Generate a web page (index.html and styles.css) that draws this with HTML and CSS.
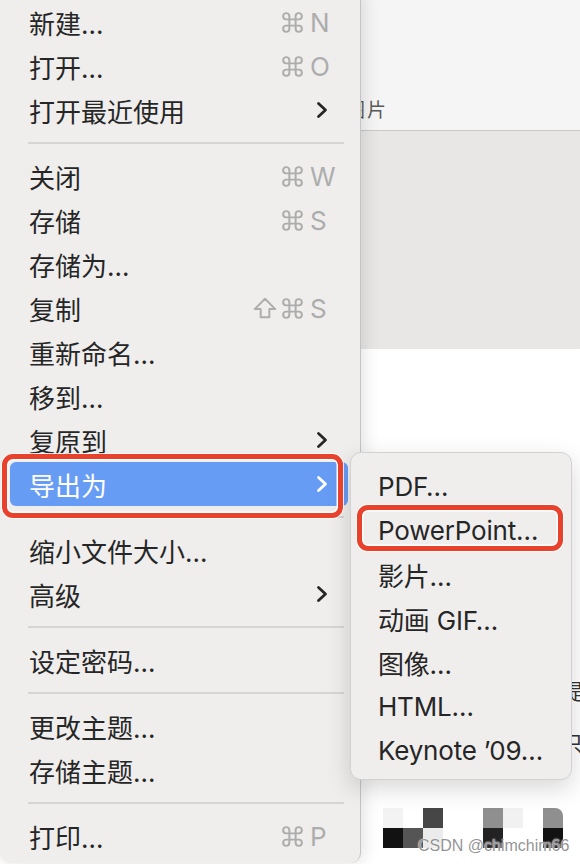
FILE: index.html
```html
<!DOCTYPE html>
<html>
<head>
  <meta charset="utf-8">
  <title>文件菜单</title>
  <link rel="stylesheet" href="styles.css">
</head>
<body>
  <div class="screen">
    <div class="doc">
      <div class="doc-bar"><span class="doc-label">图片</span></div>
      <div class="doc-band"></div>
      <div class="doc-page">
        <div class="doc-text">
          <p>提</p>
          <p>只</p>
        </div>
        <div class="pixels">
          <i style="background:#f3f3f3"></i><i></i><i style="background:#464646"></i><i></i><i></i><i style="background:#8f8f8f"></i><i style="background:#f1f1f1"></i><i></i><i class="corner" style="background:#8f8f8f"></i>
          <i style="background:#121212"></i><i style="background:#555"></i><i style="background:#ebebeb"></i><i></i><i></i><i style="background:#222"></i><i></i><i></i><i style="background:#121212"></i>
        </div>
      </div>
    </div>

    <ul class="menu menu-main">
      <li class="item"><span class="label">新建…</span><span class="keys"><svg class="cmd" viewBox="0 0 24 24"><path d="M15 6v12a3 3 0 1 0 3-3H6a3 3 0 1 0 3 3V6a3 3 0 1 0-3 3h12a3 3 0 1 0-3-3"/></svg><span class="key">N</span></span></li>
      <li class="item"><span class="label">打开…</span><span class="keys"><svg class="cmd" viewBox="0 0 24 24"><path d="M15 6v12a3 3 0 1 0 3-3H6a3 3 0 1 0 3 3V6a3 3 0 1 0-3 3h12a3 3 0 1 0-3-3"/></svg><span class="key">O</span></span></li>
      <li class="item"><span class="label">打开最近使用</span><svg class="chevron" viewBox="0 0 12 18"><polyline points="2.5,2.5 9.5,9 2.5,15.5"/></svg></li>
      <li class="sep"></li>
      <li class="item"><span class="label">关闭</span><span class="keys"><svg class="cmd" viewBox="0 0 24 24"><path d="M15 6v12a3 3 0 1 0 3-3H6a3 3 0 1 0 3 3V6a3 3 0 1 0-3 3h12a3 3 0 1 0-3-3"/></svg><span class="key">W</span></span></li>
      <li class="item"><span class="label">存储</span><span class="keys"><svg class="cmd" viewBox="0 0 24 24"><path d="M15 6v12a3 3 0 1 0 3-3H6a3 3 0 1 0 3 3V6a3 3 0 1 0-3 3h12a3 3 0 1 0-3-3"/></svg><span class="key">S</span></span></li>
      <li class="item"><span class="label">存储为…</span></li>
      <li class="item"><span class="label">复制</span><span class="keys"><svg class="shift" viewBox="0 0 24 22"><polygon points="12,2.5 21.5,12 16,12 16,19.5 8,19.5 8,12 2.5,12"/></svg><svg class="cmd" viewBox="0 0 24 24"><path d="M15 6v12a3 3 0 1 0 3-3H6a3 3 0 1 0 3 3V6a3 3 0 1 0-3 3h12a3 3 0 1 0-3-3"/></svg><span class="key">S</span></span></li>
      <li class="item"><span class="label">重新命名…</span></li>
      <li class="item"><span class="label">移到…</span></li>
      <li class="item"><span class="label">复原到</span><svg class="chevron" viewBox="0 0 12 18"><polyline points="2.5,2.5 9.5,9 2.5,15.5"/></svg></li>
      <li class="item active"><span class="label">导出为</span><svg class="chevron" viewBox="0 0 12 18"><polyline points="2.5,2.5 9.5,9 2.5,15.5"/></svg></li>
      <li class="sep"></li>
      <li class="item"><span class="label">缩小文件大小…</span></li>
      <li class="item"><span class="label">高级</span><svg class="chevron" viewBox="0 0 12 18"><polyline points="2.5,2.5 9.5,9 2.5,15.5"/></svg></li>
      <li class="sep"></li>
      <li class="item"><span class="label">设定密码…</span></li>
      <li class="sep"></li>
      <li class="item"><span class="label">更改主题…</span></li>
      <li class="item"><span class="label">存储主题…</span></li>
      <li class="sep"></li>
      <li class="item"><span class="label">打印…</span><span class="keys"><svg class="cmd" viewBox="0 0 24 24"><path d="M15 6v12a3 3 0 1 0 3-3H6a3 3 0 1 0 3 3V6a3 3 0 1 0-3 3h12a3 3 0 1 0-3-3"/></svg><span class="key">P</span></span></li>
    </ul>

    <ul class="menu menu-sub">
      <li class="item"><span class="label">PDF…</span></li>
      <li class="item"><span class="label">PowerPoint…</span></li>
      <li class="item"><span class="label">影片…</span></li>
      <li class="item"><span class="label">动画 GIF…</span></li>
      <li class="item"><span class="label">图像…</span></li>
      <li class="item"><span class="label">HTML…</span></li>
      <li class="item"><span class="label">Keynote ’09…</span></li>
    </ul>

    <div class="mark mark-export"></div>
    <div class="mark mark-ppt"></div>
    <div class="watermark">CSDN @chimchim66</div>
  </div>
</body>
</html>
```

FILE: styles.css
```css
*{margin: 0;padding: 0;box-sizing: border-box;}
ul{list-style: none;}
html, body{
  width: 100%;
  height: 100%;
  background-color: #ffffff;
  font-family: "Inter", "Noto Sans CJK SC", sans-serif;
  overflow: hidden;
}
.screen{
  position: relative;
  width: 580px;
  height: 864px;
  overflow: hidden;
}

/* document behind the menus */
.doc{
  display: flex;
  flex-direction: column;
  height: 100%;
}
.doc-bar{
  height: 131px;
  flex-shrink: 0;
  display: flex;
  align-items: flex-end;
  padding: 0 0 8px 346px;
  background-color: #f5f5f5;
  border-bottom: 1px solid #c9c9c9;
}
.doc-label{
  font-family: "Noto Sans CJK SC", sans-serif;
  font-size: 19px;
  line-height: 26px;
  letter-spacing: 2px;
  color: #5a5a5a;
}
.doc-band{
  height: 218px;
  flex-shrink: 0;
  background-color: #e8e7e6;
}
.doc-page{
  flex: 1;
  background-color: #ffffff;
}
.doc-text{
  margin: 315px 0 0 562px;
  font-family: "Noto Sans CJK SC", sans-serif;
  font-size: 21px;
  line-height: 52px;
  color: #333;
}
.pixels{
  margin: 40px 0 0 383px;
  display: grid;
  grid-template-columns: repeat(9, 20px);
  grid-auto-rows: 20px;
}
.pixels i{
  background-color: #fff;
}
.pixels .corner{
  border-top-right-radius: 8px;
}

/* menus */
.menu{
  position: absolute;
  background-color: #efeeed;
  color: #262626;
  font-size: 26px;
}
.menu-main{
  left: 0;
  top: -8px;
  width: 361px;
  padding: 8px 0 5px;
  border-right: 1px solid #c4c4c4;
  border-radius: 0 0 10px 10px;
  box-shadow: 2px 0 18px rgba(0,0,0,0.13);
}
.menu-sub{
  left: 350px;
  top: 452px;
  width: 222px;
  padding: 11px 7px 7px;
  border: 1px solid #d2d2d2;
  border-radius: 11px;
  box-shadow: 0 8px 24px rgba(0,0,0,0.16);
}
.item{
  display: flex;
  align-items: center;
  height: 44px;
  border-radius: 6px;
  white-space: nowrap;
}
.menu-main .item{
  margin: 0 12px 0 10px;
  padding: 0 16px 0 19px;
}
.menu-sub .item{
  padding: 0 10px 0 20px;
  letter-spacing: -0.2px;
}
.item .label{
  flex: 1;
}
.item.active{
  background-color: #679cf5;
  color: #ffffff;
}
.sep{
  height: 2px;
  margin: 10px 16px 10px 28px;
  background-color: #d6d5d4;
}
.keys{
  display: flex;
  align-items: center;
  color: #adadad;
}
.keys svg{
  fill: none;
  stroke: #adadad;
  stroke-width: 1.9;
  stroke-linejoin: round;
}
.keys .cmd{
  width: 25px;
  height: 25px;
  margin-right: 5px;
}
.keys .shift{
  width: 26px;
  height: 24px;
  margin-right: 2px;
  stroke-width: 1.8;
}
.key{
  width: 22px;
}
.chevron{
  width: 12px;
  height: 18px;
  margin-right: 4px;
  fill: none;
  stroke: #262626;
  stroke-width: 2.8;
  stroke-linecap: round;
  stroke-linejoin: round;
}
.active .chevron{
  stroke: #ffffff;
}

/* annotations */
.mark{
  position: absolute;
  border: 5px solid #e8412c;
  border-radius: 11px;
  box-shadow: inset 0 0 0 1.5px #ffffff, 0 0 0 1px rgba(255,255,255,0.8);
}
.mark-export{
  left: 2px;
  top: 454px;
  width: 341px;
  height: 64px;
}
.mark-ppt{
  left: 357px;
  top: 505px;
  width: 206px;
  height: 46px;
}
.watermark{
  position: absolute;
  left: 418px;
  top: 837px;
  font-family: "Liberation Sans", sans-serif;
  font-size: 16px;
  color: rgba(110,110,110,0.75);
  text-shadow: 0 0 2px #fff, 0 0 1px #fff;
}
```
